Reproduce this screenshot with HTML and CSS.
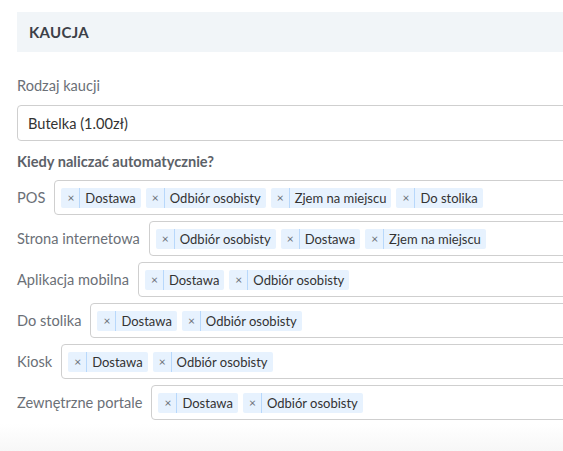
FILE: index.html
```html
<!DOCTYPE html>
<html lang="pl">
<head>
  <meta charset="UTF-8" />
  <meta name="viewport" content="width=device-width, initial-scale=1.0"/>
  <title>Kaucja</title>
  <link rel="stylesheet" href="styles.css">
</head>
<body>

  <div class="panel">
    <div class="panel-header">KAUCJA</div>

    <div class="panel-body">
      <label class="field-label">Rodzaj kaucji</label>
      <div class="select">Butelka (1.00zł)</div>

      <div class="section-title">Kiedy naliczać automatycznie?</div>

      <div class="channel">
        <span class="channel-name">POS</span>
        <div class="tags">
          <span class="tag"><span class="tag-x">×</span><span class="tag-text">Dostawa</span></span>
          <span class="tag"><span class="tag-x">×</span><span class="tag-text">Odbiór osobisty</span></span>
          <span class="tag"><span class="tag-x">×</span><span class="tag-text">Zjem na miejscu</span></span>
          <span class="tag"><span class="tag-x">×</span><span class="tag-text">Do stolika</span></span>
        </div>
      </div>

      <div class="channel">
        <span class="channel-name">Strona internetowa</span>
        <div class="tags">
          <span class="tag"><span class="tag-x">×</span><span class="tag-text">Odbiór osobisty</span></span>
          <span class="tag"><span class="tag-x">×</span><span class="tag-text">Dostawa</span></span>
          <span class="tag"><span class="tag-x">×</span><span class="tag-text">Zjem na miejscu</span></span>
        </div>
      </div>

      <div class="channel">
        <span class="channel-name">Aplikacja mobilna</span>
        <div class="tags">
          <span class="tag"><span class="tag-x">×</span><span class="tag-text">Dostawa</span></span>
          <span class="tag"><span class="tag-x">×</span><span class="tag-text">Odbiór osobisty</span></span>
        </div>
      </div>

      <div class="channel">
        <span class="channel-name">Do stolika</span>
        <div class="tags">
          <span class="tag"><span class="tag-x">×</span><span class="tag-text">Dostawa</span></span>
          <span class="tag"><span class="tag-x">×</span><span class="tag-text">Odbiór osobisty</span></span>
        </div>
      </div>

      <div class="channel">
        <span class="channel-name">Kiosk</span>
        <div class="tags">
          <span class="tag"><span class="tag-x">×</span><span class="tag-text">Dostawa</span></span>
          <span class="tag"><span class="tag-x">×</span><span class="tag-text">Odbiór osobisty</span></span>
        </div>
      </div>

      <div class="channel">
        <span class="channel-name">Zewnętrzne portale</span>
        <div class="tags">
          <span class="tag"><span class="tag-x">×</span><span class="tag-text">Dostawa</span></span>
          <span class="tag"><span class="tag-x">×</span><span class="tag-text">Odbiór osobisty</span></span>
        </div>
      </div>
    </div>

    <div class="panel-footer"></div>
  </div>

</body>
</html>
```

FILE: styles.css
```css
body {
  margin: 0;
  font-family: Lato, "Noto Sans", sans-serif;
  font-size: 14.6px;
  color: #333;
  background: #fff;
  overflow: hidden;
}

.panel {
  width: 640px;
  padding-top: 12px;
}

.panel-header {
  margin-left: 17px;
  height: 40px;
  padding-left: 12px;
  display: flex;
  align-items: center;
  background: #f1f5f8;
  color: #3c4047;
  font-size: 15px;
  font-weight: 700;
  letter-spacing: 0.3px;
}

.panel-body {
  padding: 0 0 0 17px;
}

.field-label {
  display: block;
  margin-top: 24px;
  color: #6b7077;
  line-height: 20px;
}

.select {
  margin-top: 9px;
  height: 34px;
  padding-left: 10px;
  display: flex;
  align-items: center;
  border: 1px solid #cfcfcf;
  border-radius: 4px;
}

.section-title {
  margin-top: 11px;
  color: #5c6168;
  font-weight: 700;
  line-height: 20px;
}

.channel {
  display: flex;
  align-items: center;
  gap: 9px;
  margin-top: 6px;
  color: #6b7077;
}

.section-title + .channel {
  margin-top: 8px;
}

.tags {
  flex: 1;
  height: 33px;
  padding-left: 6px;
  display: flex;
  align-items: center;
  gap: 5px;
  border: 1px solid #cfcfcf;
  border-radius: 4px;
}

.tag {
  display: flex;
  height: 20px;
  background: #e7f2fe;
  border-radius: 2px;
  color: #333;
  font-size: 13px;
  line-height: 20px;
}

.tag-x {
  padding: 0 5px 0 6px;
  border-right: 1px solid #b8d8fb;
  color: #6b7077;
  font-size: 12px;
}

.tag-text {
  padding: 0 5px;
}

.panel-footer {
  height: 27px;
  margin-top: 4px;
  background: linear-gradient(#fff, #f7f7f7);
  border-bottom: 1px solid #ececec;
}
```
